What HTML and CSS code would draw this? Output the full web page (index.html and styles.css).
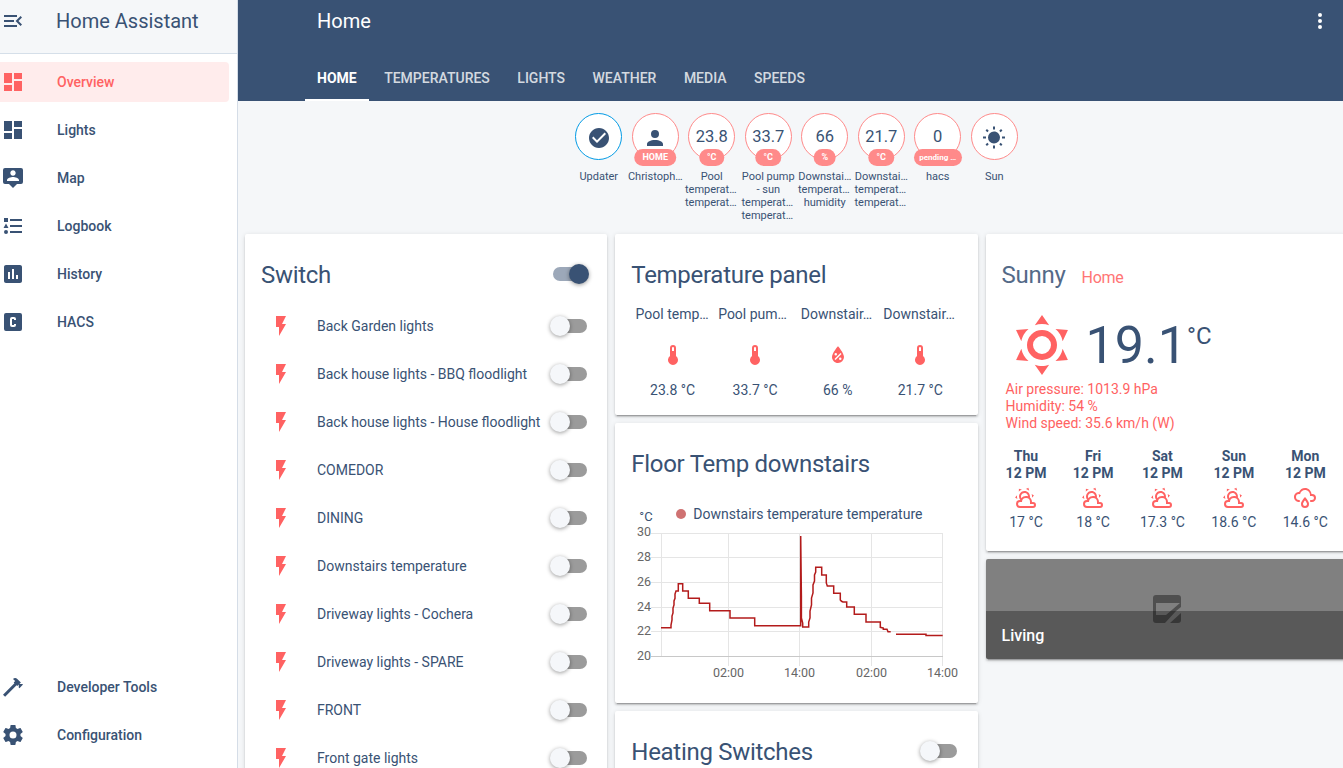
FILE: index.html
```
<!DOCTYPE html>
<html lang="en">
<head>
    <meta charset="UTF-8">
    <meta name="viewport" content="width=device-width, initial-scale=1.0">
    <title>Home Assistant</title>
    <link rel="stylesheet" href="styles.css">
</head>
<body>
    <svg class="defs" width="0" height="0">
        <symbol id="dashboard" viewBox="0 0 24 24"><path d="M13,3V9H21V3M13,21H21V11H13M3,21H11V15H3M3,13H11V3H3V13Z"/></symbol>
        <symbol id="flash" viewBox="0 0 24 24"><path d="M7,2V13H10V22L17,10H13L17,2H7Z"/></symbol>
        <symbol id="thermometer" viewBox="0 0 24 24"><path d="M15 13V5A3 3 0 0 0 9 5V13A5 5 0 1 0 15 13M12 4A1 1 0 0 1 13 5V8H11V5A1 1 0 0 1 12 4Z"/></symbol>
        <symbol id="partly" viewBox="0 0 24 24"><path d="M12.74,5.47C15.1,6.5 16.35,9.03 15.92,11.46C17.19,12.56 18,14.19 18,16V16.17C18.31,16.06 18.65,16 19,16A3,3 0 0,1 22,19A3,3 0 0,1 19,22H6A4,4 0 0,1 2,18A4,4 0 0,1 6,14H6.27C5,12.45 4.6,10.24 5.5,8.26C6.72,5.5 9.97,4.24 12.74,5.47M11.93,7.3C10.16,6.5 8.09,7.31 7.31,9.07C6.85,10.09 6.93,11.22 7.41,12.13C8.5,10.83 10.16,10 12,10C12.7,10 13.38,10.12 14,10.34C13.94,9.06 13.18,7.86 11.93,7.3M13.55,3.64C13,3.4 12.45,3.23 11.88,3.12L14.37,1.82L15.27,4.71C14.76,4.29 14.19,3.93 13.55,3.64M6.09,4.44C5.6,4.79 5.17,5.19 4.8,5.63L4.91,2.82L7.87,3.5C7.25,3.71 6.65,4.03 6.09,4.44M18,9.71C17.91,9.12 17.78,8.55 17.59,8L19.97,9.5L17.92,11.73C18.03,11.08 18.05,10.4 18,9.71M3.04,11.3C3.11,11.9 3.24,12.47 3.43,13L1.06,11.5L3.1,9.28C3,9.93 2.97,10.61 3.04,11.3M19,18H16V16A4,4 0 0,0 12,12A4,4 0 0,0 8,16H6A2,2 0 0,0 4,18A2,2 0 0,0 6,20H19A1,1 0 0,0 20,19A1,1 0 0,0 19,18Z"/></symbol>
    </svg>

    <div class="app">
        <aside class="sidebar">
            <div class="sidebar-header">
                <svg class="icon" viewBox="0 0 24 24"><path d="M21,15.61L19.59,17L14.58,12L19.59,7L21,8.39L17.44,12L21,15.61M3,6H16V8H3V6M3,13V11H13V13H3M3,18V16H16V18H3Z"/></svg>
                <span>Home Assistant</span>
            </div>
            <nav class="menu">
                <a class="menu-item active"><svg class="icon"><use href="#dashboard"/></svg>Overview</a>
                <a class="menu-item"><svg class="icon"><use href="#dashboard"/></svg>Lights</a>
                <a class="menu-item"><svg class="icon" viewBox="0 0 24 24"><path d="M20,2H4A2,2 0 0,0 2,4V16A2,2 0 0,0 4,18H8L12,22L16,18H20A2,2 0 0,0 22,16V4A2,2 0 0,0 20,2M12,4.3C13.5,4.3 14.7,5.5 14.7,7C14.7,8.5 13.5,9.7 12,9.7C10.5,9.7 9.3,8.5 9.3,7C9.3,5.5 10.5,4.3 12,4.3M18,15H6V14.1C6,12.1 10,11 12,11C14,11 18,12.1 18,14.1V15Z"/></svg>Map</a>
                <a class="menu-item"><svg class="icon" viewBox="0 0 24 24"><path d="M5,9.5L7.5,14H2.5L5,9.5M3,4H7V8H3V4M5,20A2,2 0 0,0 7,18A2,2 0 0,0 5,16A2,2 0 0,0 3,18A2,2 0 0,0 5,20M9,5V7H21V5H9M9,19H21V17H9V19M9,13H21V11H9V13Z"/></svg>Logbook</a>
                <a class="menu-item"><svg class="icon" viewBox="0 0 24 24"><path d="M9 17H7V10H9V17M13 17H11V7H13V17M17 17H15V13H17V17M19 3H5C3.9 3 3 3.9 3 5V19C3 20.1 3.9 21 5 21H19C20.1 21 21 20.1 21 19V5C21 3.9 20.1 3 19 3Z"/></svg>History</a>
                <a class="menu-item"><svg class="icon" viewBox="0 0 24 24"><path d="M11,7A2,2 0 0,0 9,9V15A2,2 0 0,0 11,17H13A2,2 0 0,0 15,15V14H13V15H11V9H13V10H15V9A2,2 0 0,0 13,7H11M5,3H19A2,2 0 0,1 21,5V19A2,2 0 0,1 19,21H5A2,2 0 0,1 3,19V5A2,2 0 0,1 5,3Z"/></svg>HACS</a>
                <div class="spacer"></div>
                <a class="menu-item"><svg class="icon" viewBox="0 0 24 24"><path d="M2,19.63L13.43,8.2L12.72,7.5L14.14,6.07L12,3.89C13.2,2.7 15.09,2.7 16.27,3.89L19.87,7.5L18.45,8.91H21.29L22,9.62L18.45,13.21L17.74,12.5V9.62L16.27,11.04L15.56,10.33L4.13,21.76L2,19.63Z"/></svg>Developer Tools</a>
                <a class="menu-item"><svg class="icon" viewBox="0 0 24 24"><path d="M12,15.5A3.5,3.5 0 0,1 8.5,12A3.5,3.5 0 0,1 12,8.5A3.5,3.5 0 0,1 15.5,12A3.5,3.5 0 0,1 12,15.5M19.43,12.97C19.47,12.65 19.5,12.33 19.5,12C19.5,11.67 19.47,11.34 19.43,11L21.54,9.37C21.73,9.22 21.78,8.95 21.66,8.73L19.66,5.27C19.54,5.05 19.27,4.96 19.05,5.05L16.56,6.05C16.04,5.66 15.5,5.32 14.87,5.07L14.5,2.42C14.46,2.18 14.25,2 14,2H10C9.75,2 9.54,2.18 9.5,2.42L9.13,5.07C8.5,5.32 7.96,5.66 7.44,6.05L4.95,5.05C4.73,4.96 4.46,5.05 4.34,5.27L2.34,8.73C2.21,8.95 2.27,9.22 2.46,9.37L4.57,11C4.53,11.34 4.5,11.67 4.5,12C4.5,12.33 4.53,12.65 4.57,12.97L2.46,14.63C2.27,14.78 2.21,15.05 2.34,15.27L4.34,18.73C4.46,18.95 4.73,19.03 4.95,18.95L7.44,17.94C7.96,18.34 8.5,18.68 9.13,18.93L9.5,21.58C9.54,21.82 9.75,22 10,22H14C14.25,22 14.46,21.82 14.5,21.58L14.87,18.93C15.5,18.67 16.04,18.34 16.56,17.94L19.05,18.95C19.27,19.03 19.54,18.95 19.66,18.73L21.66,15.27C21.78,15.05 21.73,14.78 21.54,14.63L19.43,12.97Z"/></svg>Configuration</a>
            </nav>
        </aside>

        <main class="main">
            <header class="header">
                <div class="toolbar">
                    <span>Home</span>
                    <svg class="icon" viewBox="0 0 24 24"><path d="M12,16A2,2 0 0,1 14,18A2,2 0 0,1 12,20A2,2 0 0,1 10,18A2,2 0 0,1 12,16M12,10A2,2 0 0,1 14,12A2,2 0 0,1 12,14A2,2 0 0,1 10,12A2,2 0 0,1 12,10M12,4A2,2 0 0,1 14,6A2,2 0 0,1 12,8A2,2 0 0,1 10,6A2,2 0 0,1 12,4Z"/></svg>
                </div>
                <nav class="tabs">
                    <a class="tab selected">HOME</a>
                    <a class="tab">TEMPERATURES</a>
                    <a class="tab">LIGHTS</a>
                    <a class="tab">WEATHER</a>
                    <a class="tab">MEDIA</a>
                    <a class="tab">SPEEDS</a>
                </nav>
            </header>

            <div class="badges">
                <div class="badge">
                    <div class="circle blue"><svg class="icon" viewBox="0 0 24 24"><path d="M12 2C6.5 2 2 6.5 2 12S6.5 22 12 22 22 17.5 22 12 17.5 2 12 2M10 17L5 12L6.41 10.59L10 14.17L17.59 6.58L19 8L10 17Z"/></svg></div>
                    <div class="badge-name">Updater</div>
                </div>
                <div class="badge">
                    <div class="circle"><svg class="icon" viewBox="0 0 24 24"><path d="M12,4A4,4 0 0,1 16,8A4,4 0 0,1 12,12A4,4 0 0,1 8,8A4,4 0 0,1 12,4M12,14C16.42,14 20,15.79 20,18V20H4V18C4,15.79 7.58,14 12,14Z"/></svg><span class="pill">HOME</span></div>
                    <div class="badge-name">Christoph…</div>
                </div>
                <div class="badge">
                    <div class="circle">23.8<span class="pill">°C</span></div>
                    <div class="badge-name">Pool<span class="long">temperat…</span><span class="long">temperat…</span></div>
                </div>
                <div class="badge">
                    <div class="circle">33.7<span class="pill">°C</span></div>
                    <div class="badge-name">Pool pump<br>- sun<span class="long">temperat…</span><span class="long">temperat…</span></div>
                </div>
                <div class="badge">
                    <div class="circle">66<span class="pill">%</span></div>
                    <div class="badge-name">Downstai…<span class="long">temperat…</span>humidity</div>
                </div>
                <div class="badge">
                    <div class="circle">21.7<span class="pill">°C</span></div>
                    <div class="badge-name">Downstai…<span class="long">temperat…</span><span class="long">temperat…</span></div>
                </div>
                <div class="badge">
                    <div class="circle">0<span class="pill small">pending …</span></div>
                    <div class="badge-name">hacs</div>
                </div>
                <div class="badge">
                    <div class="circle"><svg class="icon" viewBox="0 0 24 24"><path d="M3.55,18.54L4.96,19.95L6.76,18.16L5.34,16.74M11,22.45C11.32,22.45 13,22.45 13,22.45V19.5H11M12,5.5A6,6 0 0,0 6,11.5A6,6 0 0,0 12,17.5A6,6 0 0,0 18,11.5C18,8.18 15.31,5.5 12,5.5M20,12.5H23V10.5H20M17.24,18.16L19.04,19.95L20.45,18.54L18.66,16.74M20.45,4.46L19.04,3.05L17.24,4.84L18.66,6.26M13,0.55H11V3.5H13M4,10.5H1V12.5H4M6.76,4.84L4.96,3.05L3.55,4.46L5.34,6.26L6.76,4.84Z"/></svg></div>
                    <div class="badge-name">Sun</div>
                </div>
            </div>

            <div class="columns">
                <div class="column">
                    <section class="card switches">
                        <div class="card-header">Switch<span class="toggle on"></span></div>
                        <div class="row"><svg class="icon"><use href="#flash"/></svg><span>Back Garden lights</span><span class="toggle"></span></div>
                        <div class="row"><svg class="icon"><use href="#flash"/></svg><span>Back house lights - BBQ floodlight</span><span class="toggle"></span></div>
                        <div class="row"><svg class="icon"><use href="#flash"/></svg><span>Back house lights - House floodlight</span><span class="toggle"></span></div>
                        <div class="row"><svg class="icon"><use href="#flash"/></svg><span>COMEDOR</span><span class="toggle"></span></div>
                        <div class="row"><svg class="icon"><use href="#flash"/></svg><span>DINING</span><span class="toggle"></span></div>
                        <div class="row"><svg class="icon"><use href="#flash"/></svg><span>Downstairs temperature</span><span class="toggle"></span></div>
                        <div class="row"><svg class="icon"><use href="#flash"/></svg><span>Driveway lights - Cochera</span><span class="toggle"></span></div>
                        <div class="row"><svg class="icon"><use href="#flash"/></svg><span>Driveway lights - SPARE</span><span class="toggle"></span></div>
                        <div class="row"><svg class="icon"><use href="#flash"/></svg><span>FRONT</span><span class="toggle"></span></div>
                        <div class="row"><svg class="icon"><use href="#flash"/></svg><span>Front gate lights</span><span class="toggle"></span></div>
                    </section>
                </div>

                <div class="column">
                    <section class="card panel">
                        <div class="card-header">Temperature panel</div>
                        <div class="glance">
                            <div class="entity"><div class="name">Pool temp…</div><svg class="icon"><use href="#thermometer"/></svg><div>23.8 °C</div></div>
                            <div class="entity"><div class="name">Pool pum…</div><svg class="icon"><use href="#thermometer"/></svg><div>33.7 °C</div></div>
                            <div class="entity"><div class="name">Downstair…</div><svg class="icon" viewBox="0 0 24 24"><path d="M12,3.25C12,3.25 6,10 6,14C6,17.32 8.69,20 12,20A6,6 0 0,0 18,14C18,10 12,3.25 12,3.25M14.47,9.97L15.53,11.03L9.53,17.03L8.47,15.97M9.75,10A1.25,1.25 0 0,1 11,11.25A1.25,1.25 0 0,1 9.75,12.5A1.25,1.25 0 0,1 8.5,11.25A1.25,1.25 0 0,1 9.75,10M14.25,14.5A1.25,1.25 0 0,1 15.5,15.75A1.25,1.25 0 0,1 14.25,17A1.25,1.25 0 0,1 13,15.75A1.25,1.25 0 0,1 14.25,14.5Z"/></svg><div>66 %</div></div>
                            <div class="entity"><div class="name">Downstair…</div><svg class="icon"><use href="#thermometer"/></svg><div>21.7 °C</div></div>
                        </div>
                    </section>

                    <section class="card graph">
                        <div class="card-header">Floor Temp downstairs</div>
                        <div class="legend">
                            <span class="unit">°C</span>
                            <span class="dot"></span>
                            <span>Downstairs temperature temperature</span>
                        </div>
                        <svg class="chart" width="331" height="160" viewBox="0 0 331 160">
                            <g class="grid">
                                <path d="M20 8.5H312M20 32.5H312M20 57.5H312M20 82.5H312M20 106.5H312M30.5 8V132M97.5 8V141M168.5 8V141M240.5 8V141M311.5 8V141"/>
                                <path class="base" d="M20 131.5H312"/>
                            </g>
                            <g class="ylabels">
                                <text x="20" y="11">30</text>
                                <text x="20" y="36">28</text>
                                <text x="20" y="61">26</text>
                                <text x="20" y="86">24</text>
                                <text x="20" y="110">22</text>
                                <text x="20" y="135">20</text>
                            </g>
                            <g class="xlabels">
                                <text x="97.5" y="152">02:00</text>
                                <text x="168.5" y="152">14:00</text>
                                <text x="240.5" y="152">02:00</text>
                                <text x="311.5" y="152">14:00</text>
                            </g>
                            <g class="line">
                                <path d="M30 102.7H40V100L41 95V91L42 88V83L43 80V76L44 73.3V69L45 66H47.3V58.7H51.7V66H57.3V73.3H68.3V78.3H78.7V85.7H99V93H123.7V100.7H169.7V11L170.4 71V93L171.7 98V102H177.7V97L179 93V86L180.5 80V73L182 68V60L183.5 56V50L184.7 47V42.3H190.7V50H195.3V58L196.3 61H202.7V68.3H209.3V75L210.5 76.3L212 77H215.7V82H223.3V89.3H235V97H249.3V102.3L252.3 103V104.3H256L257 106.7H259.7"/>
                                <path d="M265 109.3H295V110.5H311.7"/>
                            </g>
                        </svg>
                    </section>

                    <section class="card">
                        <div class="card-header">Heating Switches<span class="toggle"></span></div>
                    </section>
                </div>

                <div class="column">
                    <section class="card weather">
                        <div class="weather-header">Sunny<span>Home</span></div>
                        <div class="now">
                            <svg class="icon" viewBox="0 0 24 24"><path d="M12,7A5,5 0 0,1 17,12A5,5 0 0,1 12,17A5,5 0 0,1 7,12A5,5 0 0,1 12,7M12,9A3,3 0 0,0 9,12A3,3 0 0,0 12,15A3,3 0 0,0 15,12A3,3 0 0,0 12,9M12,2L14.39,5.42C13.65,5.15 12.84,5 12,5C11.16,5 10.35,5.15 9.61,5.42L12,2M3.34,7L7.5,6.65C6.9,7.16 6.36,7.78 5.94,8.5C5.5,9.24 5.25,10 5.11,10.79L3.34,7M3.36,17L5.12,13.23C5.26,14 5.53,14.78 5.95,15.5C6.37,16.24 6.91,16.86 7.5,17.37L3.36,17M20.65,7L18.88,10.79C18.74,10 18.47,9.23 18.05,8.5C17.63,7.78 17.1,7.15 16.5,6.64L20.65,7M20.64,17L16.5,17.36C17.09,16.85 17.62,16.22 18.04,15.5C18.46,14.77 18.73,14 18.87,13.21L20.64,17M12,22L9.59,18.56C10.33,18.83 11.14,19 12,19C12.82,19 13.63,18.83 14.37,18.56L12,22Z"/></svg>
                            <span class="temp">19.1</span>
                            <span class="temp-unit">°C</span>
                        </div>
                        <div class="attributes">
                            <div>Air pressure: 1013.9 hPa</div>
                            <div>Humidity: 54 %</div>
                            <div>Wind speed: 35.6 km/h (W)</div>
                        </div>
                        <div class="forecast">
                            <div class="day"><b>Thu<br>12 PM</b><svg class="icon"><use href="#partly"/></svg>17 °C</div>
                            <div class="day"><b>Fri<br>12 PM</b><svg class="icon"><use href="#partly"/></svg>18 °C</div>
                            <div class="day"><b>Sat<br>12 PM</b><svg class="icon"><use href="#partly"/></svg>17.3 °C</div>
                            <div class="day"><b>Sun<br>12 PM</b><svg class="icon"><use href="#partly"/></svg>18.6 °C</div>
                            <div class="day"><b>Mon<br>12 PM</b><svg class="icon" viewBox="0 0 24 24"><path d="M6,14.03A1,1 0 0,1 7,15.03C7,15.58 6.55,16.03 6,16.03C3.24,16.03 1,13.79 1,11.03C1,8.27 3.24,6.03 6,6.03C7,3.68 9.3,2.03 12,2.03C15.43,2.03 18.24,4.69 18.5,8.06L19,8.03A4,4 0 0,1 23,12.03C23,14.23 21.21,16.03 19,16.03H18C17.45,16.03 17,15.58 17,15.03C17,14.47 17.45,14.03 18,14.03H19A2,2 0 0,0 21,12.03A2,2 0 0,0 19,10.03H17V9.03C17,6.27 14.76,4.03 12,4.03C9.5,4.03 7.45,5.84 7.06,8.21C6.73,8.09 6.37,8.03 6,8.03A3,3 0 0,0 3,11.03A3,3 0 0,0 6,14.03M12,14.15C12.18,14.39 12.37,14.66 12.56,14.94C13,15.56 14,17.03 14,18C14,19.11 13.1,20 12,20A2,2 0 0,1 10,18C10,17.03 11,15.56 11.44,14.94C11.63,14.66 11.82,14.4 12,14.15M12,11.03L11.5,11.59C11.5,11.59 10.65,12.55 9.79,13.81C8.93,15.06 8,16.56 8,18A4,4 0 0,0 12,22A4,4 0 0,0 16,18C16,16.56 15.07,15.06 14.21,13.81C13.35,12.55 12.5,11.59 12.5,11.59"/></svg>14.6 °C</div>
                        </div>
                    </section>

                    <section class="card picture">
                        <svg class="broken" width="28" height="28" viewBox="0 0 28 28"><path d="M3 0H25Q28 0 28 3V12L23 16L12 28H3Q0 28 0 25V3Q0 0 3 0ZM3 8V20H13L27 8ZM28 18V25Q28 28 25 28H17Z"/></svg>
                        <div class="caption">Living</div>
                    </section>
                </div>
            </div>
        </main>
    </div>
</body>
</html>
```
FILE: styles.css
```
* {
    box-sizing: border-box;
}
body {
    margin: 0;
    font-family: Roboto, "Noto Sans", sans-serif;
    font-size: 14px;
    color: #395274;
    background-color: #f5f7f9;
    overflow: hidden;
}
.defs {
    position: absolute;
}
.icon {
    width: 24px;
    height: 24px;
    fill: currentColor;
    fill-rule: evenodd;
    flex-shrink: 0;
}
.app {
    display: flex;
    height: 768px;
}

/* sidebar */
.sidebar {
    width: 238px;
    flex-shrink: 0;
    display: flex;
    flex-direction: column;
    background-color: #fff;
    border-right: 1px solid #d5dde7;
}
.sidebar-header {
    display: flex;
    align-items: center;
    height: 54px;
    padding: 0 0 11px 1px;
    gap: 31px;
    font-size: 20px;
    background-color: #f5f7f9;
    border-bottom: 1px solid #d5dfe9;
}
.menu {
    display: flex;
    flex-direction: column;
    flex: 1;
    gap: 8px;
    padding: 8px 8px 13px 0;
}
.menu-item {
    display: flex;
    align-items: center;
    gap: 32px;
    height: 40px;
    padding-left: 1px;
    font-weight: 500;
    border-radius: 0 4px 4px 0;
}
.menu-item.active {
    color: #ff6262;
    background-color: #ffecec;
}
.spacer {
    flex: 1;
}

/* header */
.main {
    flex: 1;
    min-width: 0;
    overflow: hidden;
}
.header {
    height: 101px;
    color: #fff;
    background-color: #395274;
}
.toolbar {
    display: flex;
    justify-content: space-between;
    align-items: center;
    height: 53px;
    padding: 0 11px 11px 79px;
    font-size: 20px;
}
.tabs {
    display: flex;
    gap: 3.5px;
    height: 48px;
    padding-left: 67px;
}
.tab {
    padding: 0 12px;
    line-height: 50px;
    font-weight: 500;
    color: rgba(255, 255, 255, 0.8);
}
.tab.selected {
    font-weight: 700;
    color: #fff;
    border-bottom: 2px solid #fff;
}

/* badges */
.badges {
    display: flex;
    justify-content: center;
    height: 129px;
    padding: 12px 0 0 12px;
}
.badge {
    display: flex;
    flex-direction: column;
    align-items: center;
    width: 56.5px;
}
.circle {
    position: relative;
    display: flex;
    align-items: center;
    justify-content: center;
    width: 47px;
    height: 47px;
    padding-bottom: 1px;
    font-size: 16.5px;
    background-color: #fff;
    border: 1px solid #ff8a8a;
    border-radius: 50%;
}
.circle.blue {
    border-color: #039be5;
}
.circle .icon {
    margin-top: 3px;
}
.pill {
    position: absolute;
    bottom: -7px;
    left: 50%;
    transform: translateX(-50%);
    height: 17px;
    padding: 0 8px;
    line-height: 17px;
    font-size: 9px;
    font-weight: 700;
    white-space: nowrap;
    color: #fff;
    background-color: #ff8a8a;
    border-radius: 9px;
}
.pill.small {
    width: 48px;
    padding: 0 5px;
    font-size: 8px;
    line-height: 18px;
    text-align: center;
}
.badge-name {
    min-width: 53.5px;
    margin-top: 10px;
    font-size: 11px;
    line-height: 13px;
    text-align: center;
    white-space: nowrap;
}
.long {
    display: block;
    text-align: left;
}

/* cards */
.columns {
    display: grid;
    grid-template-columns: repeat(3, 362.3px);
    gap: 8px;
    align-items: start;
    padding: 4px 7px;
}
.column {
    display: grid;
    grid-template-columns: minmax(0, 1fr);
    gap: 8px;
}
.card {
    background-color: #fff;
    border-radius: 2px;
    box-shadow: 0 2px 2px 0 rgba(0, 0, 0, 0.14), 0 1px 5px 0 rgba(0, 0, 0, 0.12), 0 3px 1px -2px rgba(0, 0, 0, 0.2);
}
.card-header {
    display: flex;
    align-items: center;
    justify-content: space-between;
    height: 72px;
    padding: 10px 16px 0;
    font-size: 24px;
    letter-spacing: -0.012em;
}
.toggle {
    position: relative;
    width: 34px;
    height: 14px;
    margin: 0 4.6px 0 auto;
    background-color: #9b9b9b;
    border-radius: 7px;
}
.toggle::after {
    content: "";
    position: absolute;
    top: -3px;
    left: -3px;
    width: 20px;
    height: 20px;
    background-color: #f5f7fa;
    border-radius: 50%;
    box-shadow: 0 1px 4px rgba(0, 0, 0, 0.4);
}
.toggle.on {
    background-color: #9ca8b9;
}
.toggle.on::after {
    left: 16px;
    background-color: #395274;
}
.card-header .toggle {
    margin-top: -2px;
}
.row {
    display: flex;
    align-items: center;
    height: 48px;
    padding: 0 16px 0 24px;
}
.switches .row:nth-child(2) {
    margin-top: -4px;
}
.row .icon {
    margin-right: 24px;
    color: #ff6262;
}

/* temperature panel */
.panel {
    height: 181px;
}
.glance {
    display: flex;
    padding: 0 16px;
}
.entity {
    display: flex;
    flex-direction: column;
    align-items: center;
    width: 25%;
    line-height: 16px;
}
.entity .name {
    min-width: 74px;
    white-space: nowrap;
}
.entity .icon {
    margin: 21px 0 15px;
    color: #ff6262;
}

/* history graph */
.graph {
    height: 280px;
}
.legend {
    display: flex;
    align-items: center;
    height: 20px;
    margin-top: 9px;
    padding-left: 24px;
}
.unit {
    width: 37px;
    padding-top: 5px;
    font-size: 13px;
}
.dot {
    width: 10px;
    height: 10px;
    margin-right: 7px;
    border-radius: 50%;
    background-color: #cf7272;
}
.chart {
    display: block;
    margin: 1px 0 0 16px;
    overflow: visible;
    font-size: 12.5px;
    fill: #666;
}
.grid path {
    stroke: #e5e5e5;
}
.grid .base {
    stroke: #c8c8c8;
}
.ylabels {
    text-anchor: end;
}
.xlabels {
    text-anchor: middle;
}
.line path {
    fill: none;
    stroke: #b31b1b;
    stroke-width: 1.5;
}

/* weather */
.weather {
    height: 317px;
}
.weather-header {
    display: flex;
    align-items: baseline;
    padding: 24px 16px 0;
    font-size: 24px;
    line-height: 34px;
    letter-spacing: -0.012em;
    color: #546a88;
}
.weather-header span {
    margin-left: 16px;
    font-size: 16px;
    color: #ff7575;
}
.now {
    display: flex;
    height: 86px;
    padding: 14px 20px 0;
}
.now .icon {
    width: 72px;
    height: 72px;
    color: #ff6262;
}
.temp {
    margin-left: 8px;
    font-size: 52px;
    line-height: 73px;
}
.temp-unit {
    font-size: 24px;
    line-height: 54px;
}
.attributes {
    padding: 0 20px;
    line-height: 17px;
    color: #ff6262;
}
.forecast {
    display: flex;
    justify-content: space-between;
    padding: 16px 20px 0;
}
.day {
    display: flex;
    flex-direction: column;
    align-items: center;
    line-height: 17px;
    text-align: center;
}
.day b {
    font-weight: 700;
}
.day .icon {
    margin: 4px 0;
    color: #ff6262;
}
.picture {
    position: relative;
    display: flex;
    align-items: flex-end;
    height: 100px;
    overflow: hidden;
    background-color: #808080;
}
.broken {
    position: absolute;
    top: 36px;
    left: 167px;
    fill: #4f4f4f;
    fill-rule: evenodd;
}
.caption {
    position: relative;
    width: 100%;
    height: 48px;
    padding: 0 16px;
    font-size: 16px;
    font-weight: 500;
    line-height: 50px;
    color: #fff;
    background-color: rgba(0, 0, 0, 0.3);
}
```
